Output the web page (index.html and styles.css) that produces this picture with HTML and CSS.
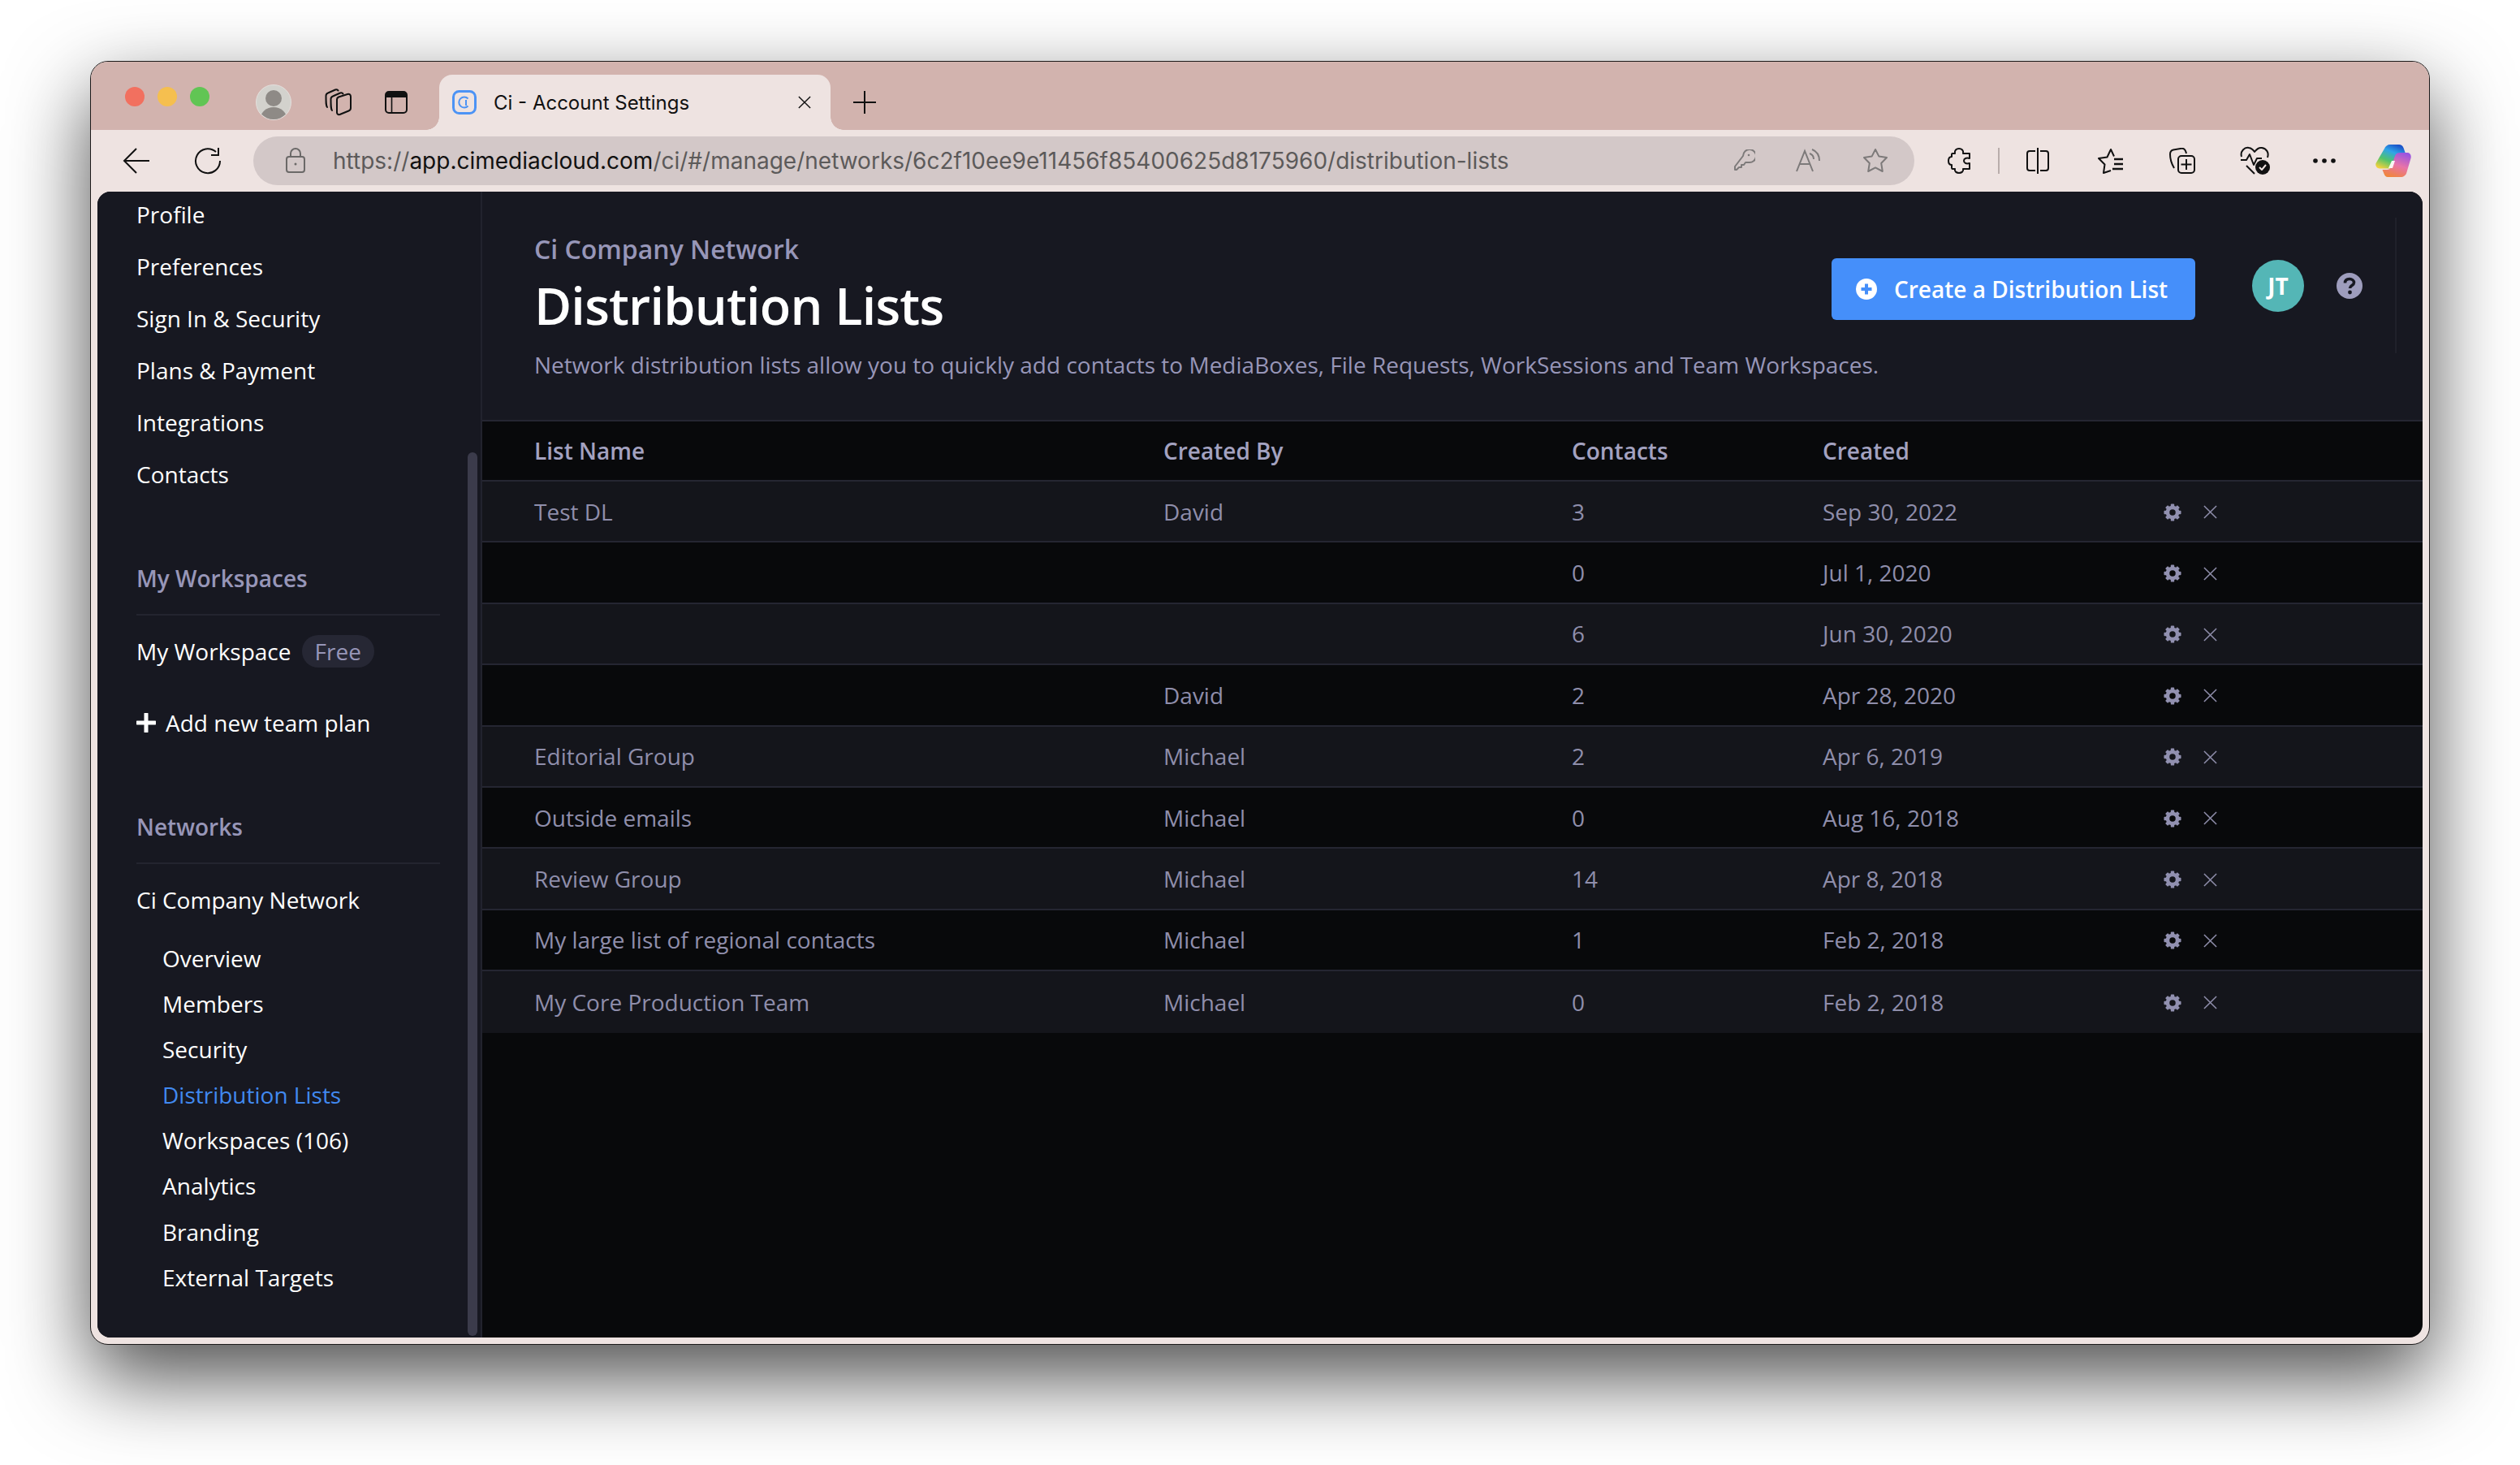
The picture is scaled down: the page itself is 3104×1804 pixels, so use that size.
FILE: index.html
```html
<!DOCTYPE html>
<html>
<head>
  <title>Ci - Account Settings</title>
  <link rel="stylesheet" href="styles.css">
</head>
<body>
  <svg class="defs" width="0" height="0">
    <defs>
      <symbol id="gear" viewBox="0 0 24 24">
        <circle cx="12" cy="12" r="6.6" fill="none" stroke="currentColor" stroke-width="5"/>
        <g fill="currentColor">
          <rect x="9.6" y="0.5" width="4.8" height="5" rx="1"/>
          <rect x="9.6" y="18.5" width="4.8" height="5" rx="1"/>
          <rect x="0.5" y="9.6" width="5" height="4.8" rx="1"/>
          <rect x="18.5" y="9.6" width="5" height="4.8" rx="1"/>
          <rect x="9.6" y="0.5" width="4.8" height="5" rx="1" transform="rotate(45 12 12)"/>
          <rect x="9.6" y="18.5" width="4.8" height="5" rx="1" transform="rotate(45 12 12)"/>
          <rect x="0.5" y="9.6" width="5" height="4.8" rx="1" transform="rotate(45 12 12)"/>
          <rect x="18.5" y="9.6" width="5" height="4.8" rx="1" transform="rotate(45 12 12)"/>
        </g>
      </symbol>
      <symbol id="cross" viewBox="0 0 18 18">
        <path d="M1 1 L17 17 M17 1 L1 17" fill="none" stroke="currentColor" stroke-width="1.6"/>
      </symbol>
      <linearGradient id="copA" x1="0.7" y1="0" x2="0.2" y2="1">
        <stop offset="0" stop-color="#1b53c9"/>
        <stop offset="0.3" stop-color="#2fa4e8"/>
        <stop offset="0.65" stop-color="#52c46a"/>
        <stop offset="1" stop-color="#f2d13c"/>
      </linearGradient>
      <linearGradient id="copB" x1="0.7" y1="0" x2="0.3" y2="1">
        <stop offset="0" stop-color="#9a55e0"/>
        <stop offset="0.5" stop-color="#e873a8"/>
        <stop offset="1" stop-color="#f0863c"/>
      </linearGradient>
    </defs>
  </svg>

  <div class="window">
    <div class="tabbar">
      <div class="lights">
        <span class="light red"></span>
        <span class="light yellow"></span>
        <span class="light green"></span>
      </div>
      <svg class="profile" viewBox="0 0 44 44" width="44" height="44">
        <defs><clipPath id="pc"><circle cx="22" cy="22" r="21"/></clipPath></defs>
        <circle cx="22" cy="22" r="21.5" fill="#d3d2cd" stroke="#e4dfdc"/>
        <g clip-path="url(#pc)" fill="#8e8a86">
          <circle cx="22" cy="17" r="10"/>
          <ellipse cx="22" cy="42" rx="16" ry="14"/>
        </g>
      </svg>
      <svg class="bar-icon workspaces" viewBox="0 0 34 34" width="34" height="34" fill="none" stroke="#111" stroke-width="2" stroke-linejoin="round" stroke-linecap="round">
        <path d="M3 23 C1.5 21 1.5 19 1.5 9 C1.5 7 2.5 6 4 5.5 L13 1.5 C15 1 16 1.5 16.5 2.5"/>
        <path d="M9 27 C7.5 25 7.5 23 7.5 13 C7.5 11 8.5 10 10 9.5 L19 5.5 C21 5 22 5.5 22.5 6.5"/>
        <path d="M15 13.5 C15 12 16 11 17 10.5 L28 7 C30.5 6.5 32 7.5 32 10 V24 C32 26 31 27 29.5 27.5 L18.5 32 C16.5 32.5 15 31.5 15 29.5 Z"/>
      </svg>
      <svg class="bar-icon vtabs" viewBox="0 0 28 28" width="28" height="28">
        <rect x="1" y="1" width="26" height="26" rx="4" fill="none" stroke="#111" stroke-width="2"/>
        <path d="M1 8 V5 A4 4 0 0 1 5 1 H23 A4 4 0 0 1 27 5 V8 Z" fill="#111"/>
        <path d="M8.5 8 V27" stroke="#111" stroke-width="1.6"/>
      </svg>
      <div class="tab">
        <svg class="favicon" viewBox="0 0 30 30" width="30" height="30" fill="none" stroke="#4c93f5">
          <rect x="1.5" y="1.5" width="27" height="27" rx="7" stroke-width="3"/>
          <path d="M19.5 10.5 A6.5 6.5 0 1 0 19.5 19.5" stroke-width="2"/>
          <path d="M17 12 V19" stroke-width="2"/>
        </svg>
        <span class="tab-title">Ci - Account Settings</span>
        <svg class="tab-close" width="16" height="16"><use href="#cross"/></svg>
      </div>
      <svg class="new-tab" viewBox="0 0 30 30" width="30" height="30">
        <path d="M15 1 V29 M1 15 H29" stroke="#111" stroke-width="2"/>
      </svg>
    </div>

    <div class="toolbar">
      <svg class="nav-icon back" viewBox="0 0 34 34" width="34" height="34" fill="none" stroke="#111" stroke-width="2">
        <path d="M33 17 H2 M17 2 L2 17 L17 32"/>
      </svg>
      <svg class="nav-icon reload" viewBox="0 0 34 34" width="34" height="34" fill="none" stroke="#111" stroke-width="2">
        <path d="M32 17 A15 15 0 1 1 27 6 M30 1 V10 H21"/>
      </svg>
      <div class="address">
        <svg class="lock" viewBox="0 0 26 32" width="26" height="32" fill="none" stroke="#6b6968" stroke-width="2">
          <rect x="2" y="11" width="22" height="19" rx="3"/>
          <path d="M7 11 V7 A6 6 0 0 1 19 7 V11"/>
          <circle cx="13" cy="20" r="1.5" fill="#6b6968" stroke="none"/>
        </svg>
        <span class="url">https://<b>app.cimediacloud.com</b>/ci/#/manage/networks/6c2f10ee9e11456f85400625d8175960/distribution-lists</span>
        <div class="addr-icons">
          <svg viewBox="0 0 28 28" width="28" height="28" fill="none" stroke="#7d7a7a" stroke-width="2" stroke-linejoin="round">
            <path d="M12 9 A8 8 0 1 1 19 17 L15 17 L13 20 H10 V23 H7 L4 26 H2 V22 Z" transform="translate(1 -1)"/>
            <circle cx="20" cy="7" r="1.3" fill="#7d7a7a" stroke="none"/>
          </svg>
          <svg viewBox="0 0 32 30" width="32" height="30" fill="none" stroke="#7d7a7a" stroke-width="2">
            <path d="M1 28 L11 3 L21 28 M5 19 H17"/>
            <path d="M17 6 C20 7 22 10 22 13 M20 1 C25 3 29 8 29 15"/>
          </svg>
          <svg viewBox="0 0 32 32" width="32" height="32" fill="none" stroke="#7d7a7a" stroke-width="2" stroke-linejoin="round">
            <polygon points="16,2 20.4,10.6 30,12 23.2,19 24.8,29 16,24.4 7.2,29 8.8,19 2,12 11.6,10.6"/>
          </svg>
        </div>
      </div>
      <div class="tools">
        <svg viewBox="0 0 28 32" width="28" height="32" fill="none" stroke="#111" stroke-width="2" stroke-linejoin="round">
          <path d="M9 7 C8 3 11 1 14 1 C17 1 20 3 19 7 H27 V13 C23 12 20 13 20 16 C20 19 23 20 27 19 V26 H19 C20 29 17 31 14 31 C11 31 8 29 9 26 H6 C5 26 5 25 5 24 V21 C1 21 1 18 1 16 C1 14 1 11 5 11 V8 C5 7 6 7 6 7 Z"/>
        </svg>
        <span class="tool-sep"></span>
        <svg viewBox="0 0 30 32" width="30" height="32" fill="none" stroke="#111" stroke-width="2">
          <path d="M12 4 H5 A3 3 0 0 0 2 7 V25 A3 3 0 0 0 5 28 H12 M18 4 H25 A3 3 0 0 1 28 7 V25 A3 3 0 0 1 25 28 H18 M15 0 V32"/>
        </svg>
        <svg viewBox="0 0 34 32" width="34" height="32" fill="none" stroke="#111" stroke-width="2" stroke-linejoin="round">
          <path d="M17 28 L8 31 L9.5 20.5 L2 13 L12.5 11.5 L17 2 L21 10.5"/>
          <path d="M21 14 H32 M21 20 H32 M19 26 H32" stroke-width="2.4"/>
        </svg>
        <svg viewBox="0 0 32 32" width="32" height="32" fill="none" stroke="#111" stroke-width="2" stroke-linejoin="round">
          <path d="M6 25 C3 20 1 13 1 8 C1 5 3 3 5 2.5 L15 0.8 C18 0.5 20 2 21 7"/>
          <rect x="11" y="10" width="20" height="21" rx="4"/>
          <path d="M21 14 V27 M14.5 20.5 H27.5"/>
        </svg>
        <svg viewBox="0 0 38 36" width="38" height="36" fill="none" stroke="#111" stroke-width="2" stroke-linejoin="round">
          <path d="M2 13 C0 6 6 1 11 2 C14 2.500 16 4 18 7 C21 3 24 1.500 27 2 C33 3 36 8 34 14"/>
          <path d="M1 17 H8 L12 10 L17 23 L21 15 H27"/>
          <path d="M8 24 L18 34"/>
          <circle cx="28" cy="26" r="9" fill="#111" stroke="none"/>
          <path d="M24 26 L27 29 L32 23" stroke="#eee3e1"/>
        </svg>
        <svg class="more" viewBox="0 0 28 6" width="28" height="6" fill="#111">
          <circle cx="3" cy="3" r="2.800"/>
          <circle cx="14" cy="3" r="2.800"/>
          <circle cx="25" cy="3" r="2.800"/>
        </svg>
        <svg viewBox="0 0 44 40" width="44" height="40">
          <path d="M11 5 C12 2 15 0 18 0 H29 C31.500 0 33.500 1.500 34.500 4 L37 11 H31 C28.500 11 27 12.500 26 15 L21 28 C20 29.500 18.500 29.500 16.500 29.500 H5 C1.500 29.500 -0.500 26 0.500 23 Z" fill="url(#copA)"/>
          <path d="M33 10 H39 C42.500 10 44.500 13 43.500 17 L38.500 34 C37.500 38 34.500 40 31 40 H15 C13 40 11.500 38.500 10.500 36 L8.500 31 H14 C17 31 18.500 29.500 19.500 27 L24 14 C25 11.500 27 10 30 10 Z" fill="url(#copB)"/>
          <path d="M24 20 H20 L16 29 H21 Z" fill="#fff" opacity="0.9"/>
        </svg>
      </div>
    </div>

    <div class="panel">
      <aside class="sidebar">
        <ul class="nav">
          <li>Profile</li>
          <li>Preferences</li>
          <li>Sign In &amp; Security</li>
          <li>Plans &amp; Payment</li>
          <li>Integrations</li>
          <li>Contacts</li>
        </ul>

        <h4 class="side-heading first">My Workspaces</h4>
        <div class="side-row">My Workspace<span class="pill">Free</span></div>
        <div class="side-row add-plan">
          <svg viewBox="0 0 24 24" width="24" height="24"><path d="M12 1 V23 M1 12 H23" stroke="#fff" stroke-width="5" stroke-linecap="round"/></svg>
          Add new team plan
        </div>

        <h4 class="side-heading">Networks</h4>
        <div class="side-row">Ci Company Network</div>
        <ul class="subnav">
          <li>Overview</li>
          <li>Members</li>
          <li>Security</li>
          <li class="active">Distribution Lists</li>
          <li>Workspaces (106)</li>
          <li>Analytics</li>
          <li>Branding</li>
          <li>External Targets</li>
        </ul>
        <div class="scroll-thumb"></div>
      </aside>

      <main class="main">
        <header class="page-head">
          <div class="page-titles">
            <div class="eyebrow">Ci Company Network</div>
            <h1>Distribution Lists</h1>
            <p>Network distribution lists allow you to quickly add contacts to MediaBoxes, File Requests, WorkSessions and Team Workspaces.</p>
          </div>
          <div class="head-actions">
            <button class="btn-create">
              <svg viewBox="0 0 26 26" width="26" height="26">
                <circle cx="13" cy="13" r="13" fill="#fff"/>
                <path d="M13 6.500 V19.500 M6.500 13 H19.500" stroke="#458ffa" stroke-width="4"/>
              </svg>
              Create a Distribution List
            </button>
            <div class="avatar">JT</div>
            <svg class="help" viewBox="0 0 32 32" width="32" height="32">
              <circle cx="16" cy="16" r="16" fill="#9e9dbd"/>
              <path d="M10.500 12.500 C10.500 9 13 7.500 16 7.500 C19 7.500 21.500 9.500 21.500 12 C21.500 15.500 16.500 15.500 16.500 19" fill="none" stroke="#171821" stroke-width="3.600"/>
              <circle cx="16.500" cy="24" r="2.400" fill="#171821"/>
            </svg>
          </div>
        </header>

        <div class="table">
          <div class="row row-head">
            <div>List Name</div><div>Created By</div><div>Contacts</div><div>Created</div><div></div>
          </div>
          <div class="row">
            <div>Test DL</div><div>David</div><div>3</div><div>Sep 30, 2022</div>
            <div class="actions"><svg class="gear"><use href="#gear"/></svg><svg class="cross"><use href="#cross"/></svg></div>
          </div>
          <div class="row">
            <div></div><div></div><div>0</div><div>Jul 1, 2020</div>
            <div class="actions"><svg class="gear"><use href="#gear"/></svg><svg class="cross"><use href="#cross"/></svg></div>
          </div>
          <div class="row">
            <div></div><div></div><div>6</div><div>Jun 30, 2020</div>
            <div class="actions"><svg class="gear"><use href="#gear"/></svg><svg class="cross"><use href="#cross"/></svg></div>
          </div>
          <div class="row">
            <div></div><div>David</div><div>2</div><div>Apr 28, 2020</div>
            <div class="actions"><svg class="gear"><use href="#gear"/></svg><svg class="cross"><use href="#cross"/></svg></div>
          </div>
          <div class="row">
            <div>Editorial Group</div><div>Michael</div><div>2</div><div>Apr 6, 2019</div>
            <div class="actions"><svg class="gear"><use href="#gear"/></svg><svg class="cross"><use href="#cross"/></svg></div>
          </div>
          <div class="row">
            <div>Outside emails</div><div>Michael</div><div>0</div><div>Aug 16, 2018</div>
            <div class="actions"><svg class="gear"><use href="#gear"/></svg><svg class="cross"><use href="#cross"/></svg></div>
          </div>
          <div class="row">
            <div>Review Group</div><div>Michael</div><div>14</div><div>Apr 8, 2018</div>
            <div class="actions"><svg class="gear"><use href="#gear"/></svg><svg class="cross"><use href="#cross"/></svg></div>
          </div>
          <div class="row">
            <div>My large list of regional contacts</div><div>Michael</div><div>1</div><div>Feb 2, 2018</div>
            <div class="actions"><svg class="gear"><use href="#gear"/></svg><svg class="cross"><use href="#cross"/></svg></div>
          </div>
          <div class="row">
            <div>My Core Production Team</div><div>Michael</div><div>0</div><div>Feb 2, 2018</div>
            <div class="actions"><svg class="gear"><use href="#gear"/></svg><svg class="cross"><use href="#cross"/></svg></div>
          </div>
        </div>
      </main>
    </div>
  </div>
</body>
</html>
```

FILE: styles.css
```css
html, body {
  height: 100%;
}

body {
  margin: 0;
  padding: 75px 0 0 111px;
  box-sizing: border-box;
  background-color: #fff;
  font-family: "Open Sans", "Noto Sans", sans-serif;
  overflow: hidden;
}

.defs {
  display: block;
  height: 0;
}

/* browser frame */
.window {
  width: 2882px;
  height: 1581px;
  box-sizing: border-box;
  border: 1px solid #1c1a1a;
  border-radius: 22px;
  background-color: #eee3e1;
  box-shadow: 0 40px 100px rgba(0, 0, 0, 0.7);
  overflow: hidden;
  display: flex;
  flex-direction: column;
}

.tabbar {
  height: 84px;
  flex: none;
  background-color: #d2b3ae;
  display: flex;
  align-items: flex-end;
}

.lights {
  display: flex;
  gap: 16px;
  margin: 0 0 29px 42px;
}

.light {
  width: 24px;
  height: 24px;
  border-radius: 50%;
}

.red { background-color: #f2705f; }
.yellow { background-color: #f5bf4f; }
.green { background-color: #61c554; }

.profile {
  margin: 0 0 12px 57px;
}

.workspaces {
  margin: 0 0 17px 41px;
}

.vtabs {
  margin: 0 0 20px 40px;
}

.tab {
  position: relative;
  width: 482px;
  height: 68px;
  margin-left: 39px;
  box-sizing: border-box;
  padding: 0 24px 0 16px;
  background-color: #eee3e1;
  border-radius: 16px 16px 0 0;
  display: flex;
  align-items: center;
}

.tab::before,
.tab::after {
  content: "";
  position: absolute;
  bottom: 0;
  width: 16px;
  height: 16px;
}

.tab::before {
  left: -16px;
  background: radial-gradient(circle at 0 0, transparent 15.5px, #eee3e1 16px);
}

.tab::after {
  right: -16px;
  background: radial-gradient(circle at 100% 0, transparent 15.500px, #eee3e1 16px);
}

.tab-title {
  margin-left: 21px;
  flex: 1;
  font-family: Inter, "Liberation Sans", sans-serif;
  font-size: 24px;
  color: #111;
}

.tab-close {
  color: #111;
}

.new-tab {
  margin: 0 0 19px 27px;
}

.toolbar {
  height: 76px;
  flex: none;
  display: flex;
  align-items: center;
}

.nav-icon {
  flex: none;
}

.back {
  margin-left: 39px;
}

.reload {
  margin-left: 54px;
}

.address {
  width: 2046px;
  height: 60px;
  margin-left: 39px;
  flex: none;
  box-sizing: border-box;
  padding: 0 32px 0 39px;
  background-color: #d3c8c8;
  border-radius: 30px;
  display: flex;
  align-items: center;
}

.url {
  flex: 1;
  margin-left: 33px;
  font-family: Inter, "Liberation Sans", sans-serif;
  font-size: 28px;
  color: #5c5a5a;
  white-space: nowrap;
}

.url b {
  font-weight: 400;
  color: #111;
}

.addr-icons {
  display: flex;
  align-items: center;
  gap: 50px;
}

.tools {
  flex: none;
  margin-left: 7px;
  display: grid;
  grid-template-columns: 96px 1px 96px 84px 92px 88px 82px 88px;
  align-items: center;
  justify-items: center;
}

.tool-sep {
  width: 2px;
  height: 32px;
  background-color: #b9adab;
}

.panel {
  flex: 1;
  min-height: 0;
  margin: 0 8px 8px 8px;
  display: flex;
  border-radius: 16px;
  overflow: hidden;
  background-color: #08090b;
}

/* sidebar */
.sidebar {
  position: relative;
  width: 472px;
  flex: none;
  box-sizing: content-box;
  border-right: 2px solid #22232e;
  background-color: #171821;
  color: #fff;
  font-size: 28px;
  overflow: hidden;
}

.nav,
.subnav {
  list-style: none;
  margin: 0;
  padding: 0;
}

.nav {
  margin: -4px 0 0 48px;
}

.nav li {
  line-height: 64px;
}

.side-heading {
  margin: 88px 50px 0 48px;
  padding-bottom: 24px;
  border-bottom: 2px solid #23242f;
  font-size: 28px;
  font-weight: 600;
  line-height: 40px;
  color: #9796b8;
}

.side-heading.first {
  margin-top: 76px;
}

.side-row {
  margin: 24px 0 0 48px;
  line-height: 40px;
  display: flex;
  align-items: center;
}

.add-plan {
  margin-top: 48px;
  gap: 12px;
}

.pill {
  margin-left: 13px;
  padding: 0 16px;
  border-radius: 20px;
  background-color: #262734;
  color: #9796b8;
}

.subnav {
  margin: 24px 0 0 80px;
}

.subnav li {
  line-height: 56.100px;
}

.subnav .active {
  color: #4189f0;
}

.scroll-thumb {
  position: absolute;
  top: 321px;
  left: 456px;
  width: 12px;
  height: 1088px;
  border-radius: 6px;
  background-color: #3b3b4b;
}

/* main column */
.main {
  flex: 1;
  min-width: 0;
}

.page-head {
  height: 281px;
  box-sizing: border-box;
  background-color: #171821;
  display: flex;
  padding-left: 64px;
}

.page-titles {
  flex: 1;
  min-width: 0;
  padding-top: 49px;
}

.eyebrow {
  font-size: 32px;
  font-weight: 600;
  line-height: 44px;
  color: #9796b8;
}

h1 {
  margin: 7px 0 0;
  font-size: 63px;
  font-weight: 600;
  letter-spacing: -0.8px;
  line-height: 80px;
  color: #fff;
}

.page-titles p {
  margin: 11px 0 0;
  font-size: 28px;
  line-height: 44px;
  color: #9796b8;
  white-space: nowrap;
}

.head-actions {
  flex: none;
  width: 696px;
  height: 167px;
  margin: 32px 32px 0 0;
  box-sizing: border-box;
  border-right: 2px solid #20212b;
  display: flex;
  align-items: flex-start;
}

.btn-create {
  flex: none;
  width: 448px;
  height: 76px;
  margin-top: 50px;
  padding: 0 0 0 30px;
  border: none;
  border-radius: 6px;
  background-color: #458ffa;
  color: #fff;
  font-family: inherit;
  font-size: 28px;
  font-weight: 600;
  display: flex;
  align-items: center;
  gap: 21px;
  cursor: pointer;
}

.avatar {
  flex: none;
  width: 64px;
  height: 64px;
  margin: 52px 0 0 70px;
  border-radius: 50%;
  background-color: #54b6b6;
  color: #fff;
  font-size: 28px;
  font-weight: 700;
  line-height: 64px;
  text-align: center;
}

.help {
  flex: none;
  margin: 68px 0 0 40px;
}

/* table */
.table {
  border-top: 2px solid #252632;
}

.row {
  height: 75.4px;
  box-sizing: border-box;
  padding-left: 64px;
  border-bottom: 2px solid #252632;
  display: grid;
  grid-template-columns: 775px 503px 309px 415px 1fr;
  align-items: center;
  font-size: 28px;
  color: #8f8eab;
  background-color: #08090b;
}

.row:nth-child(even) {
  background-color: #14151b;
}

.row:last-child {
  border-bottom: none;
}

.row-head {
  height: 74px;
  font-weight: 600;
  color: #a3a2c0;
}

.actions {
  display: flex;
  align-items: center;
  padding-top: 2px;
  color: #8f8eab;
}

.gear {
  width: 22px;
  height: 22px;
  margin-left: 5px;
  color: #9190b0;
}

.cross {
  width: 17px;
  height: 17px;
  margin-left: 27px;
}
```
